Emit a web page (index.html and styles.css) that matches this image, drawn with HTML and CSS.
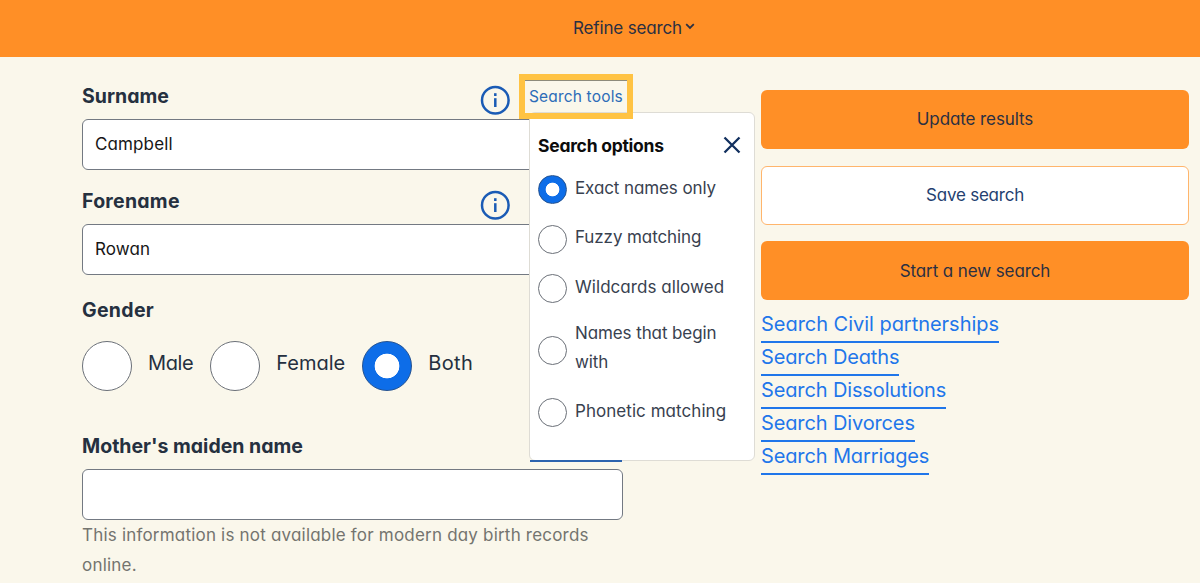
FILE: index.html
```html
<!DOCTYPE html>
<html lang="en">
<head>
<meta charset="utf-8">
<title>Refine search</title>
<link rel="stylesheet" href="styles.css">
</head>
<body>
<header class="topbar">
  <span class="topbar-label">Refine search</span>
  <svg class="chevron" viewBox="0 0 10 7"><path d="M1.2 1.2 5 4.9 8.8 1.2"/></svg>
</header>
<main class="layout">
  <form class="fields">
    <section class="field">
      <div class="label-row">
        <label class="label" for="surname">Surname</label>
        <svg class="info" viewBox="0 0 30 30"><circle cx="15.3" cy="15.2" r="13.3"/><path d="M15.3 13.2V22"/><path d="M15.3 8.2v2.8"/></svg>
        <div class="tools">
          <span class="tools-link">Search tools</span>
          <div class="popover">
            <div class="popover-head">
              <strong class="popover-title">Search options</strong>
              <svg class="close" viewBox="0 0 18 18"><path d="M1.5 1.5 16.5 16.5M16.5 1.5 1.5 16.5"/></svg>
            </div>
            <div class="option"><span class="dot on"></span><span class="option-text snug">Exact names only</span></div>
            <div class="option"><span class="dot"></span><span class="option-text snug">Fuzzy matching</span></div>
            <div class="option"><span class="dot"></span><span class="option-text">Wildcards allowed</span></div>
            <div class="option tall"><span class="dot"></span><span class="option-text snug">Names that begin with</span></div>
            <div class="option"><span class="dot"></span><span class="option-text">Phonetic matching</span></div>
            <span class="underline"></span>
          </div>
          <span class="highlight"></span>
        </div>
      </div>
      <input class="input" id="surname" value="Campbell">
    </section>
    <section class="field">
      <div class="label-row">
        <label class="label forename-label" for="forename">Forename</label>
        <svg class="info solo" viewBox="0 0 30 30"><circle cx="15.3" cy="15.2" r="13.3"/><path d="M15.3 13.2V22"/><path d="M15.3 8.2v2.8"/></svg>
      </div>
      <input class="input" id="forename" value="Rowan">
    </section>
    <section class="field gender">
      <div class="label-row"><span class="label gender-label">Gender</span></div>
      <div class="radios">
        <div class="radio male"><span class="dot big"></span><span class="radio-text">Male</span></div>
        <div class="radio"><span class="dot big"></span><span class="radio-text">Female</span></div>
        <div class="radio both"><span class="dot big on"></span><span class="radio-text">Both</span></div>
      </div>
    </section>
    <section class="field">
      <div class="label-row"><label class="label" for="maiden">Mother's maiden name</label></div>
      <input class="input" id="maiden">
      <p class="help">This information is not available for modern day birth records online.</p>
    </section>
  </form>
  <aside class="actions">
    <button class="button">Update results</button>
    <button class="button outline">Save search</button>
    <button class="button last">Start a new search</button>
    <ul class="links">
      <li><a class="link wide">Search Civil partnerships</a></li>
      <li><a class="link">Search Deaths</a></li>
      <li><a class="link">Search Dissolutions</a></li>
      <li><a class="link">Search Divorces</a></li>
      <li><a class="link">Search Marriages</a></li>
    </ul>
  </aside>
</main>
</body>
</html>
```
FILE: styles.css
```css
* { box-sizing: border-box; }
body {
  margin: 0;
  height: 583px;
  overflow: hidden;
  background: #faf7eb;
  color: #25303f;
  font-family: Inter, "Open Sans", sans-serif;
  font-feature-settings: "cv11" 1;
}
.topbar {
  height: 57px;
  display: flex;
  align-items: center;
  justify-content: center;
  gap: 3px;
  padding: 0 0 2px 68px;
  background: #ff8f26;
  color: #2b3042;
  font-size: 17px;
}
.topbar-label { letter-spacing: -.15px; }
.chevron { width: 10px; height: 7px; margin-top: -2px; fill: none; stroke: #2b3042; stroke-width: 1.8; }
.layout { display: grid; grid-template-columns: 541px 428px; column-gap: 138px; padding: 24px 0 0 82px; }
.fields { margin: 0; display: flex; flex-direction: column; }
.field { margin-bottom: 16px; }
.label-row { display: flex; align-items: center; height: 30px; margin-bottom: 8px; }
.label { flex: 1; font-size: 19.5px; font-weight: 700; line-height: 30px; }
.forename-label { letter-spacing: .25px; }
.gender-label { letter-spacing: .3px; }
.info { width: 30px; height: 30px; margin: 8px 19px 0 0; fill: none; stroke: #1a5bb5; stroke-width: 2.5; }
.solo { margin-right: 113px; }
.input {
  display: block;
  width: 541px;
  height: 51px;
  padding: 0 12px 2px;
  border: 1px solid #737982;
  border-radius: 6px;
  background: #fff;
  color: #161616;
  font: inherit;
  font-size: 17px;
  letter-spacing: .12px;
}
.tools { position: relative; width: 94px; height: 30px; font-size: 15.5px; line-height: 31px; color: #2c6cb8; }
.tools-link { white-space: nowrap; letter-spacing: .17px; }
.highlight {
  position: absolute;
  z-index: 3;
  left: -10px;
  top: -7px;
  width: 114px;
  height: 45px;
  border: 6px solid #ffc343;
  box-shadow: inset 0 1px 0 #8d8b7c;
}
.popover {
  position: absolute;
  z-index: 2;
  left: 0;
  top: 31px;
  width: 226px;
  height: 349px;
  padding: 17px 13px 0 8px;
  border: 1px solid #dedcd5;
  border-radius: 6px;
  background: #fff;
  color: #38414f;
}
.popover-head { display: flex; justify-content: space-between; align-items: center; height: 30px; margin-bottom: 5px; color: #0c0c0c; }
.popover-title { font-size: 17.5px; font-weight: 700; letter-spacing: -.25px; }
.close { width: 18px; height: 18px; fill: none; stroke: #12305f; stroke-width: 2.3; }
.option { display: flex; align-items: center; gap: 8px; height: 49.5px; }
.option.tall { height: 74.5px; }
.option-text { font-size: 17px; line-height: 29px; margin-top: -3px; letter-spacing: .05px; }
.option-text.snug { letter-spacing: -.1px; }
.tall .option-text { margin-top: -5px; }
.underline { position: absolute; left: 0; bottom: -2px; width: 92px; height: 2px; background: #2c63ae; }
.dot { flex: none; width: 29px; height: 29px; border: 1px solid #6b7078; border-radius: 50%; background: #fff; }
.dot.on { background: radial-gradient(circle, #fff 6.5px, #0d6de8 7.2px); border-color: #235291; }
.dot.big { width: 50px; height: 50px; }
.dot.big.on { background: radial-gradient(circle, #fff 12px, #0d6de8 12.7px); }
.gender { margin-top: 4px; margin-bottom: 40px; }
.gender .label-row { margin-bottom: 16px; }
.radios { display: flex; gap: 17px; }
.radio { display: flex; align-items: center; gap: 16px; height: 50px; }
.radio-text { font-size: 20px; margin-top: -6px; }
.male .radio-text { letter-spacing: -.4px; }
.both .radio-text { letter-spacing: .4px; }
.help { margin: 0; color: #74746f; font-size: 17px; line-height: 30px; letter-spacing: .2px; }
.actions { display: flex; flex-direction: column; padding-top: 9px; }
.button {
  height: 59px;
  margin: 0 0 16.5px;
  padding: 0 0 1px;
  border: 0;
  border-radius: 6px;
  background: #ff8f26;
  color: #2b3042;
  font: inherit;
  font-size: 17px;
  letter-spacing: -.1px;
  font-feature-settings: inherit;
}
.outline { border: 1px solid #ffb56c; background: #fff; color: #243f70; letter-spacing: -.22px; }
.last { padding: 0; }
.links { list-style: none; margin: -8px 0 0; padding: 0; }
.links li { height: 33px; }
.link { display: inline-block; height: 34.5px; border-bottom: 2px solid #1f76ea; color: #1f76ea; font-size: 20px; line-height: 31px; letter-spacing: -.13px; }
.link.wide { letter-spacing: -.03px; }
```
